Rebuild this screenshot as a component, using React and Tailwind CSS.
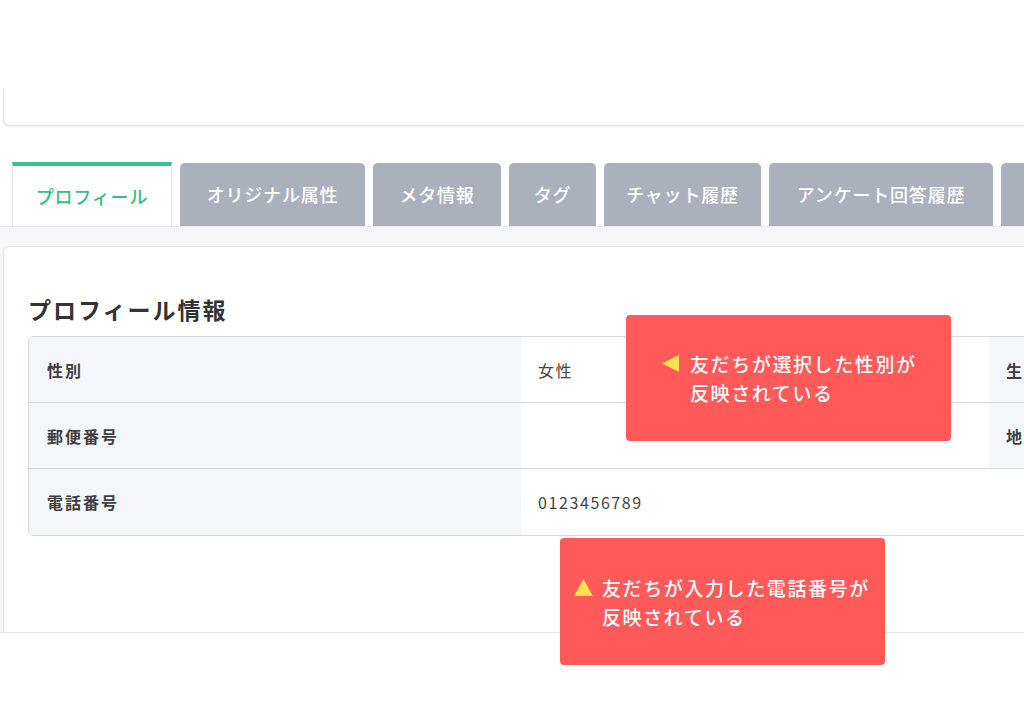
const font = { fontFamily: '"Noto Sans CJK JP", "Noto Sans", sans-serif' }

const tabs = [
  { label: 'オリジナル属性', w: 'w-[185px]' },
  { label: 'メタ情報', w: 'w-[128px]' },
  { label: 'タグ', w: 'w-[87px]' },
  { label: 'チャット履歴', w: 'w-[157px]' },
  { label: 'アンケート回答履歴', w: 'w-[224px]' },
  { label: '', w: 'w-[120px]' },
]

function Callout({ className, arrow, lines }) {
  return (
    <div className={`absolute w-[325px] rounded-[4px] bg-[#ff5959] flex items-center text-white text-[19px] font-medium tracking-[1.6px] leading-[29px] ${className}`}>
      <div className="flex items-start">
        <div className="w-[28px] h-[29px] flex items-center shrink-0">
          {arrow === 'left' ? (
            <svg width="17" height="17" viewBox="0 0 17 17"><polygon points="0,8.5 17,0 17,17" fill="#ffe14d" /></svg>
          ) : (
            <svg width="19" height="17" viewBox="0 0 19 17"><polygon points="9.5,0 19,17 0,17" fill="#ffe14d" /></svg>
          )}
        </div>
        <div className="whitespace-nowrap">
          {lines[0]}<br />{lines[1]}
        </div>
      </div>
    </div>
  )
}

export default function App() {
  const rows = [
    { label: '性別', value: '女性', label2: '生' },
    { label: '郵便番号', value: '', label2: '地' },
    { label: '電話番号', value: '0123456789', label2: null },
  ]
  return (
    <div className="relative w-[1024px] h-[724px] overflow-hidden bg-white" style={font}>
      {/* top card */}
      <div className="h-[126px] flex flex-col">
        <div className="h-[88px] bg-white" />
        <div className="flex-1 ml-[3px] border-l border-b border-[#e2e3e7] rounded-bl-[6px] bg-white shadow-[0_1px_2px_rgba(0,0,0,0.06)]" />
      </div>

      {/* tabs */}
      <div className="mt-[36px] flex items-end gap-[8px] pl-[12px] h-[64px]">
        <div className="w-[160px] h-[64px] shrink-0 bg-white border-t-[4px] border-[#3bc190] border-x border-x-[#e6e7eb] flex items-center justify-center text-[#35bd8b] text-[18px] font-medium tracking-[0.8px]">
          プロフィール
        </div>
        {tabs.map((t, i) => (
          <div key={i} className={`${t.w} h-[63px] shrink-0 rounded-t-[5px] bg-[#acb0bb] flex items-center justify-center text-white text-[18px] font-medium tracking-[0.8px]`}>
            {t.label}
          </div>
        ))}
      </div>

      {/* content */}
      <div className="bg-[#f7f7f9] border-t border-[#e8e9ec] pt-[19px] border-b border-b-[#e2e3e7]">
        <div className="ml-[3px] bg-white border-l border-t border-[#e4e5e9] rounded-tl-[6px] pt-[45px] pb-[96px] pl-[24px]">
          <h2 className="text-[23px] font-bold text-[#333] tracking-[2px] leading-[34px] mb-[10px]">プロフィール情報</h2>
          <div className="w-[1400px] border border-[#d6d7dc] rounded-[5px] overflow-hidden text-[16px] tracking-[2px] text-[#444]">
            {rows.map((r, i) => (
              <div key={i} className={`flex h-[66px] ${i < rows.length - 1 ? 'border-b border-[#d6d7dc]' : ''}`}>
                <div className="w-[492px] bg-[#f5f6fa] flex items-center pl-[18px] font-bold text-[#3f3f3f]">{r.label}</div>
                <div className="w-[468px] bg-white flex items-center pl-[17px] tracking-[1.6px]">{r.value}</div>
                {r.label2 && (
                  <div className="flex-1 bg-[#f5f6fa] flex items-center pl-[17px] font-bold text-[#3f3f3f]">{r.label2}</div>
                )}
                {!r.label2 && <div className="flex-1 bg-white" />}
              </div>
            ))}
          </div>
        </div>
      </div>

      <Callout className="left-[626px] top-[315px] h-[126px] pl-[36px]" arrow="left" lines={['友だちが選択した性別が', '反映されている']} />
      <Callout className="left-[560px] top-[538px] h-[127px] pl-[14px]" arrow="up" lines={['友だちが入力した電話番号が', '反映されている']} />
    </div>
  )
}
